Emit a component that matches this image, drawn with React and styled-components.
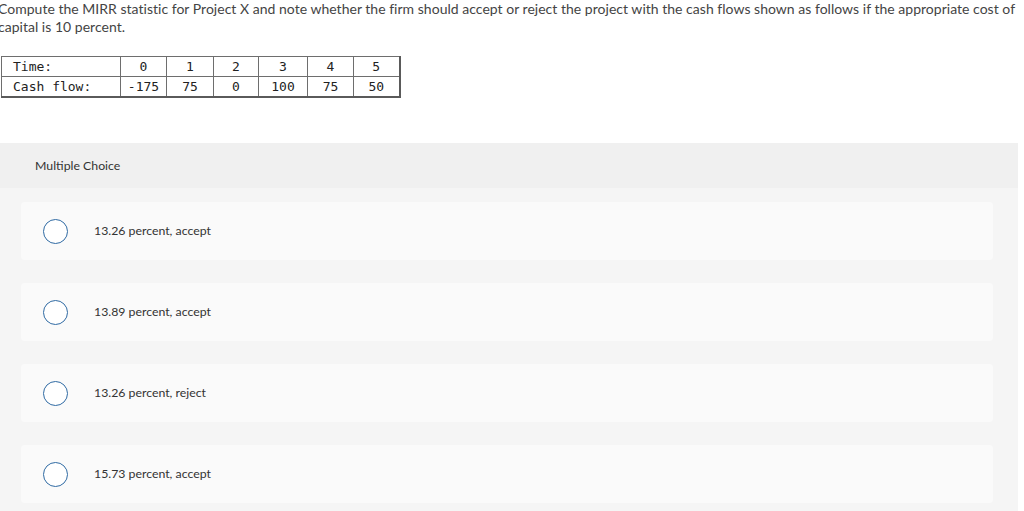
import React from 'react';
import styled, { createGlobalStyle } from 'styled-components';

const GlobalStyle = createGlobalStyle`
  html, body {
    margin: 0;
    padding: 0;
    background: #ffffff;
  }
  body {
    font-family: Lato, "Open Sans", Arial, sans-serif;
    color: #333333;
    overflow: hidden;
  }
`;

const times = ['0', '1', '2', '3', '4', '5'];
const flows = ['-175', '75', '0', '100', '75', '50'];
const colWidths = [46, 47, 45, 49, 46, 46];

const choices = [
  '13.26 percent, accept',
  '13.89 percent, accept',
  '13.26 percent, reject',
  '15.73 percent, accept',
];

function App() {
  return (
    <Page>
      <GlobalStyle />
      <Question>
        Compute the MIRR statistic for Project X and note whether the firm should accept or reject the project with the cash flows shown as follows if the appropriate cost of
        <br />
        capital is 10 percent.
      </Question>
      <FlowTable>
        <colgroup>
          <col style={{ width: 119 }} />
          {colWidths.map((w, i) => (
            <col key={i} style={{ width: w }} />
          ))}
        </colgroup>
        <tbody>
          <tr>
            <LabelCell>Time:</LabelCell>
            {times.map((t, i) => (
              <ValueCell key={i}>{t}</ValueCell>
            ))}
          </tr>
          <tr>
            <LabelCell>Cash flow:</LabelCell>
            {flows.map((f, i) => (
              <ValueCell key={i}>{f}</ValueCell>
            ))}
          </tr>
        </tbody>
      </FlowTable>
      <ChoicePanel>
        <PanelHeader>Multiple Choice</PanelHeader>
        <ChoiceList>
          {choices.map((c, i) => (
            <ChoiceCard key={i}>
              <Radio />
              <ChoiceText>{c}</ChoiceText>
            </ChoiceCard>
          ))}
        </ChoiceList>
      </ChoicePanel>
    </Page>
  );
}

const Page = styled.div`
  width: 1024px;
  height: 511px;
  overflow: hidden;
`;

const Question = styled.p`
  margin: 0 0 0 -2px;
  font-size: 14px;
  line-height: 18px;
  letter-spacing: 0.02px;
  color: #444444;
  white-space: nowrap;
`;

const FlowTable = styled.table`
  margin: 20px 0 0 1px;
  border-collapse: collapse;
  table-layout: fixed;
  width: 399px;
  border-right: 2px solid #5a5a5a;
  border-bottom: 2px solid #5a5a5a;
  font-family: "DejaVu Sans Mono", "Liberation Mono", monospace;
  font-size: 13px;
  color: #222222;
`;

const LabelCell = styled.td`
  height: 19px;
  padding: 0 0 0 11px;
  border: 1px solid #6e6e6e;
  text-align: left;
  line-height: 18px;
`;

const ValueCell = styled.td`
  height: 19px;
  padding: 0;
  border: 1px solid #6e6e6e;
  text-align: center;
  line-height: 18px;
`;

const ChoicePanel = styled.div`
  margin: 45px 6px 0 0;
  background: #f5f5f5;
  height: 400px;
`;

const PanelHeader = styled.div`
  height: 45px;
  display: flex;
  align-items: center;
  padding-left: 35px;
  padding-bottom: 1px;
  box-sizing: border-box;
  background: #f0f0f0;
  font-size: 12.3px;
  color: #333333;
`;

const ChoiceList = styled.div`
  display: flex;
  flex-direction: column;
  gap: 23px;
  padding: 14px 25px 0 21px;
`;

const ChoiceCard = styled.div`
  height: 58px;
  display: flex;
  align-items: center;
  gap: 26px;
  padding-left: 22px;
  background: #fafafa;
  border-radius: 4px;
`;

const Radio = styled.span`
  width: 25px;
  height: 25px;
  box-sizing: border-box;
  border: 1.3px solid #2f6aa3;
  border-radius: 50%;
  background: #ffffff;
  flex-shrink: 0;
`;

const ChoiceText = styled.span`
  font-size: 12.3px;
  color: #333333;
  padding-bottom: 1px;
`;

export default App;
